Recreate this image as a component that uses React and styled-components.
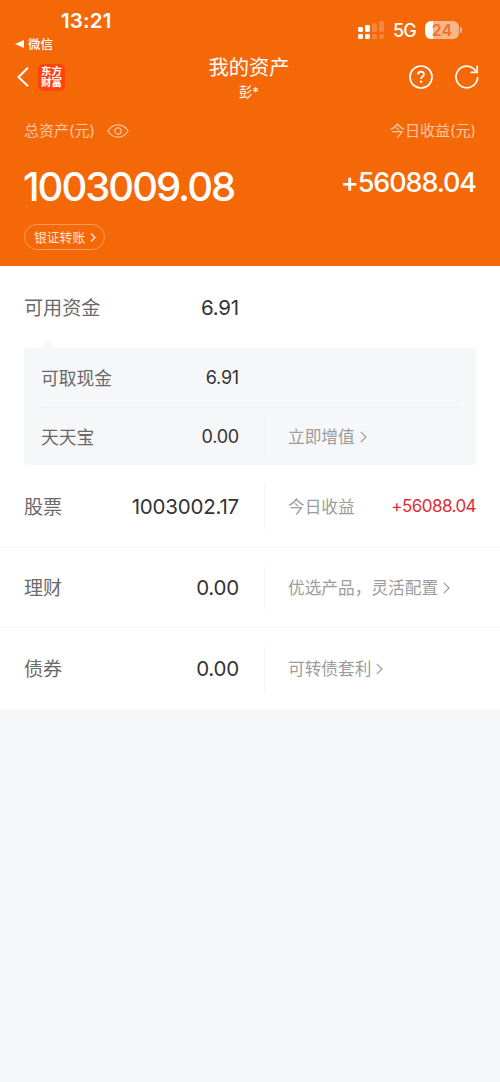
import React from "react";
import styled, { createGlobalStyle } from "styled-components";

const COLORS = {
  orange: "#f46808",
  page: "#f6f7f9",
  line: "#f4f4f5",
  label: "#6a6a6a",
  amount: "#333",
  muted: "#9c9c9c",
  red: "#e22c35",
};

const GlobalStyle = createGlobalStyle`
  *, *::before, *::after {
    box-sizing: border-box;
  }

  body {
    margin: 0;
    background: ${COLORS.page};
    font-family: Inter, "Noto Sans CJK SC", sans-serif;
  }

  h1, p {
    margin: 0;
    font-weight: 400;
  }

  svg {
    display: block;
    flex: none;
  }
`;

const Chevron = ({ width = 7, height = 12, stroke = 1.2 }) => (
  <svg width={width} height={height} viewBox="0 0 7 12" fill="none">
    <path
      d="M0.8 0.8L6 6L0.8 11.2"
      stroke="currentColor"
      strokeWidth={stroke}
    />
  </svg>
);

const SignalIcon = () => (
  <svg width="26" height="18" viewBox="0 0 26 18" fill="#fff">
    <rect x="0" y="6" width="5" height="5" rx="1.4" />
    <rect x="7" y="4" width="5" height="7" rx="1.4" />
    <rect x="0" y="13" width="5" height="5" rx="1.4" />
    <rect x="7" y="13" width="5" height="5" rx="1.4" />
    <g opacity="0.2">
      <rect x="14" y="2" width="5" height="9" rx="1.4" />
      <rect x="21" y="0" width="5" height="11" rx="1.4" />
      <rect x="14" y="13" width="5" height="5" rx="1.4" />
      <rect x="21" y="13" width="5" height="5" rx="1.4" />
    </g>
  </svg>
);

const BackIcon = () => (
  <svg width="12" height="20" viewBox="0 0 12 20" fill="none">
    <path d="M11 0.8L1.5 10L11 19.2" stroke="#fff" strokeWidth="2" />
  </svg>
);

const HelpIcon = () => (
  <svg width="24" height="24" viewBox="0 0 24 24" fill="none" stroke="#fff">
    <circle cx="12" cy="12" r="11" strokeWidth="1.7" />
    <path
      d="M9.1 9.4C9.1 7.6 10.3 6.6 12 6.6S14.9 7.6 14.9 9.2C14.9 11.4 12.1 11.6 12.1 14.1"
      strokeWidth="1.8"
    />
    <circle cx="12.1" cy="16.8" r="1.2" fill="#fff" stroke="none" />
  </svg>
);

const RefreshIcon = () => (
  <svg width="24" height="24" viewBox="0 0 24 24" fill="none" stroke="#fff">
    <path d="M22.6 12A10.8 10.8 0 1 1 18.6 3.6L22 7" strokeWidth="1.7" />
    <path d="M22.2 0.8V7.4H15.6" strokeWidth="1.7" />
  </svg>
);

const EyeIcon = () => (
  <svg width="22" height="14" viewBox="0 0 22 14" fill="none" stroke="#fff">
    <path
      d="M0.9 7C3.4 3 6.9 0.8 11 0.8S18.6 3 21.1 7C18.6 11 15.1 13.2 11 13.2S3.4 11 0.9 7Z"
      strokeWidth="1.2"
    />
    <circle cx="11" cy="7" r="3.2" strokeWidth="1.2" />
  </svg>
);

const SideLink = ({ children }) => (
  <SideText>
    <span>{children}</span>
    <Chevron />
  </SideText>
);

const holdings = [
  {
    name: "股票",
    amount: "1003002.17",
    height: 82,
    caption: "今日收益",
    profit: "+56088.04",
  },
  { name: "理财", amount: "0.00", height: 80, link: "优选产品，灵活配置" },
  { name: "债券", amount: "0.00", height: 82, link: "可转债套利" },
];

const App = () => {
  return (
    <Screen>
      <GlobalStyle />
      <Hero>
        <StatusBar>
          <Time>13:21</Time>
          <StatusIcons>
            <SignalIcon />
            <Network>5G</Network>
            <Battery>
              <BatteryBody>24</BatteryBody>
              <BatteryTip />
            </Battery>
          </StatusIcons>
        </StatusBar>
        <ReturnLink>
          <svg width="9" height="8" viewBox="0 0 9 8" fill="#fff">
            <path d="M0 4L9 0V8Z" />
          </svg>
          <span>微信</span>
        </ReturnLink>
        <NavBar>
          <NavSide>
            <BackIcon />
            <Brand>
              <span>东方</span>
              <span>财富</span>
            </Brand>
          </NavSide>
          <div>
            <Title>我的资产</Title>
            <Owner>彭*</Owner>
          </div>
          <NavActions>
            <HelpIcon />
            <RefreshIcon />
          </NavActions>
        </NavBar>
        <Captions>
          <Caption>
            <span>总资产(元)</span>
            <EyeIcon />
          </Caption>
          <Caption>
            <span>今日收益(元)</span>
          </Caption>
        </Captions>
        <Totals>
          <Total>1003009.08</Total>
          <TodayTotal>+56088.04</TodayTotal>
        </Totals>
        <TransferButton>
          <span>银证转账</span>
          <Chevron width={6} height={9} stroke={1.9} />
        </TransferButton>
      </Hero>

      <Sheet>
        <Row $height={82}>
          <Label>可用资金</Label>
          <Amount>6.91</Amount>
        </Row>
        <Panel>
          <PanelRow $height={59}>
            <Label $small>可取现金</Label>
            <Amount $small>6.91</Amount>
          </PanelRow>
          <PanelRow $height={58}>
            <Label $small>天天宝</Label>
            <Amount $small>0.00</Amount>
            <Side $height={38}>
              <SideLink>立即增值</SideLink>
            </Side>
          </PanelRow>
        </Panel>
        {holdings.map((item) => (
          <Row key={item.name} $height={item.height}>
            <Label>{item.name}</Label>
            <Amount>{item.amount}</Amount>
            <Side $height={46}>
              {item.link && <SideLink>{item.link}</SideLink>}
              {item.caption && <SideText>{item.caption}</SideText>}
              {item.profit && <Profit>{item.profit}</Profit>}
            </Side>
          </Row>
        ))}
      </Sheet>
    </Screen>
  );
};

const Screen = styled.div`
  width: 500px;
  min-height: 1082px;
  background: ${COLORS.page};
`;

const Hero = styled.header`
  height: 266px;
  background: ${COLORS.orange};
  color: #fff;
`;

const StatusBar = styled.div`
  display: flex;
  justify-content: space-between;
  height: 36px;
  padding: 7px 38px 0 61px;
`;

const Time = styled.div`
  font-size: 20.5px;
  font-weight: 600;
  line-height: 28px;
  letter-spacing: 0.2px;
`;

const StatusIcons = styled.div`
  display: flex;
  align-items: center;
  padding-top: 16px;
  height: 30px;
`;

const Network = styled.span`
  margin-left: 9px;
  font-size: 18px;
  font-weight: 500;
  letter-spacing: -0.8px;
`;

const Battery = styled.div`
  display: flex;
  align-items: center;
  margin-left: 9px;
`;

const BatteryBody = styled.div`
  width: 34px;
  height: 18px;
  border-radius: 6px;
  background: linear-gradient(to right, #fff 8px, #fab68a 8px);
  color: #ef7424;
  font-size: 16px;
  font-weight: 600;
  line-height: 18px;
  text-align: center;
`;

const BatteryTip = styled.div`
  width: 2px;
  height: 6px;
  margin-left: 1px;
  border-radius: 0 2px 2px 0;
  background: #fab68a;
`;

const ReturnLink = styled.div`
  display: flex;
  align-items: center;
  gap: 4px;
  height: 16px;
  padding-left: 15px;
  font-size: 12.5px;
  font-weight: 500;

  span {
    margin-top: -2px;
  }
`;

const NavBar = styled.nav`
  display: grid;
  grid-template-columns: 1fr auto 1fr;
  height: 52px;
  padding: 1px 21px 0 17px;
  text-align: center;

  > div:nth-child(2) {
    padding: 2px 0 0 2px;
  }
`;

const NavSide = styled.div`
  display: flex;
  align-items: center;
  gap: 9px;
  height: 48px;
`;

const NavActions = styled(NavSide)`
  justify-content: flex-end;
  gap: 22px;
`;

const Brand = styled.div`
  display: flex;
  flex-direction: column;
  justify-content: center;
  width: 27px;
  height: 27px;
  border-radius: 5px;
  background: #ff4410;
  font-size: 10.5px;
  font-weight: 700;
  line-height: 11.5px;
`;

const Title = styled.h1`
  font-size: 20.3px;
  line-height: 26px;
`;

const Owner = styled.p`
  font-size: 13.5px;
  line-height: 22px;
`;

const Captions = styled.div`
  display: flex;
  justify-content: space-between;
  height: 52px;
  padding: 16px 24px 0;
`;

const Caption = styled.div`
  display: flex;
  align-items: center;
  gap: 12px;
  height: 22px;
  font-size: 15px;
  opacity: 0.62;

  span {
    margin-top: -3px;
  }
`;

const Totals = styled.div`
  display: flex;
  justify-content: space-between;
  height: 68px;
  padding: 0 24px 0 23px;
`;

const Total = styled.div`
  font-size: 40px;
  font-weight: 500;
  line-height: 62px;
  letter-spacing: -2px;
`;

const TodayTotal = styled.div`
  font-size: 27px;
  font-weight: 500;
  line-height: 54px;
  letter-spacing: -1.1px;
`;

const TransferButton = styled.button`
  display: flex;
  align-items: center;
  gap: 5px;
  width: 81px;
  height: 26px;
  margin-left: 24px;
  padding: 0 0 0 9px;
  border: 1px solid rgba(255, 255, 255, 0.35);
  border-radius: 13px;
  background: none;
  color: #ffe3d0;
  font: inherit;
  font-size: 12.8px;

  span {
    margin-top: -2px;
  }
`;

const Sheet = styled.main`
  display: flex;
  flex-direction: column;
  background: #fff;
`;

const Row = styled.div`
  display: flex;
  align-items: center;
  height: ${(p) => p.$height}px;
  padding: 0 24px;

  & + & {
    border-top: 1px solid ${COLORS.line};
  }
`;

const Panel = styled.section`
  position: relative;
  margin: 0 24px;
  padding: 0 17px;
  border-radius: 4px;
  background: ${COLORS.page};

  /* Pointer to the row above */
  &::before {
    content: "";
    position: absolute;
    top: -8px;
    left: 17px;
    border: solid transparent;
    border-width: 0 7px 8px;
    border-bottom-color: ${COLORS.page};
  }
`;

const PanelRow = styled(Row)`
  padding: 0;

  & + & {
    border-top: 1px solid #f0f1f3;
  }
`;

const Label = styled.div`
  width: ${(p) => (p.$small ? 90 : 100)}px;
  padding-bottom: ${(p) => (p.$small ? 2 : 1)}px;
  color: ${COLORS.label};
  font-size: ${(p) => (p.$small ? 17.8 : 19.1)}px;
`;

const Amount = styled.div`
  width: ${(p) => (p.$small ? 109 : 116)}px;
  padding-right: 1px;
  color: ${COLORS.amount};
  font-size: ${(p) => (p.$small ? 18 : 20.5)}px;
  letter-spacing: -0.2px;
  text-align: right;
`;

const Side = styled.div`
  flex: 1;
  display: flex;
  align-items: center;
  justify-content: space-between;
  height: ${(p) => p.$height}px;
  margin-left: 24px;
  padding-left: 23px;
  border-left: 1px solid #f3f4f5;
`;

const SideText = styled.div`
  display: flex;
  align-items: center;
  gap: 5px;
  color: ${COLORS.muted};
  font-size: 16.7px;
  white-space: nowrap;

  span {
    margin-top: -2px;
  }
`;

const Profit = styled.div`
  color: ${COLORS.red};
  font-size: 17px;
  letter-spacing: -0.55px;
`;

export default App;
